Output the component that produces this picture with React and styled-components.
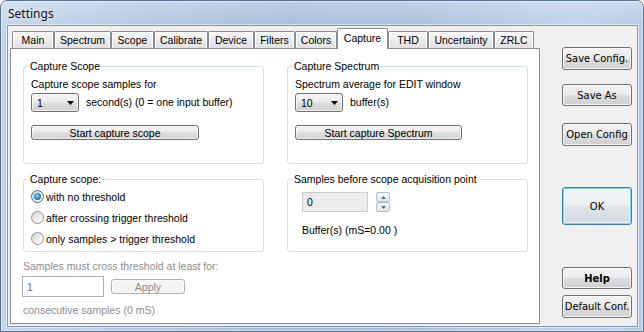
import React from 'react'
import styled, { createGlobalStyle } from 'styled-components'

const Global = createGlobalStyle`
  html, body { margin: 0; padding: 0; background: #fff; }
  body { width: 644px; height: 332px; overflow: hidden; }
  * { box-sizing: border-box; }
`

const UI = '"Liberation Sans", Arial, sans-serif'
const TAHOMA = '"DejaVu Sans Condensed", "DejaVu Sans", sans-serif'

const Window = styled.div`
  width: 644px;
  height: 332px;
  border: 1px solid #5b708a;
  border-radius: 7px 7px 0 0;
  padding: 0 5px 4px 6px;
  display: flex;
  flex-direction: column;
  background:
    linear-gradient(180deg, rgba(255,255,255,0.28), rgba(255,255,255,0) 26px),
    linear-gradient(90deg, #c4d6eb 0%, #b3c8e2 22%, #a5bddb 45%, #aac1de 65%, #bfd2e9 90%, #b5cae4 100%);
  box-shadow: inset 0 0 0 1px rgba(255,255,255,0.45);
`

const TitleBar = styled.div`
  height: 24px;
  flex: none;
  display: flex;
  align-items: center;
  padding: 0 0 0 1px;
  font: 12px "Noto Sans", "Open Sans", sans-serif;
  color: #111;
  text-shadow: 0 0 6px rgba(255,255,255,0.9);
`

const Client = styled.div`
  flex: 1;
  display: flex;
  align-items: flex-start;
  background: #f0f0f0;
  border: 1px solid #8597ae;
  box-shadow: 0 0 0 1px rgba(255,255,255,0.5);
`

const TabControl = styled.div`
  margin: 2px 0 0 2px;
  width: 530px;
  display: flex;
  flex-direction: column;
`

const TabStrip = styled.div`
  height: 20px;
  display: flex;
  align-items: flex-end;
  padding-left: 2px;
`

const Tab = styled.div`
  width: ${p => p.$w}px;
  height: ${p => (p.$active ? 21 : 17)}px;
  margin-bottom: ${p => (p.$active ? -1 : 0)}px;
  position: relative;
  z-index: ${p => (p.$active ? 1 : 0)};
  display: flex;
  align-items: center;
  justify-content: center;
  padding-bottom: ${p => (p.$active ? 3 : 0)}px;
  border: 1px solid #898c95;
  border-bottom: none;
  border-radius: 2px 2px 0 0;
  background: ${p => (p.$active ? '#fff' : 'linear-gradient(#f6f6f6, #ededed 50%, #e0e0e0)')};
  box-shadow: ${p => (p.$active ? 'none' : 'inset 1px 1px 0 #fff, inset -1px 0 0 #fff')};
  font: 10.5px ${UI};
  color: #000;
  white-space: nowrap;
`

const Panel = styled.div`
  height: 276px;
  border: 1px solid #898c95;
  background: #fff;
  padding: 11px 11px 0 12px;
`

const Grid = styled.div`
  display: grid;
  grid-template-columns: 241px 241px;
  column-gap: 23px;
  row-gap: 9px;
`

const Group = styled.fieldset`
  margin: 0;
  min-width: 0;
  padding: 0 7px ${p => p.$pb}px 7px;
  border: 1px solid #d5dfe5;
  border-radius: 3px;
`

const Legend = styled.legend`
  padding: 0 1px;
  margin-left: -2px;
  font: 10.5px/13px ${UI};
  color: #000;
`

const Line = styled.div`
  font: 10.5px/13px ${UI};
  color: ${p => (p.$off ? '#8d8d8d' : '#000')};
  margin-top: ${p => p.$mt || 0}px;
  margin-left: ${p => p.$ml || 0}px;
  white-space: nowrap;
`

const Row = styled.div`
  display: flex;
  align-items: center;
  gap: ${p => p.$gap || 7}px;
  margin-top: ${p => p.$mt || 0}px;
  margin-left: ${p => p.$ml || 0}px;
`

const Combo = styled.div`
  width: 48px;
  height: 19px;
  border: 1px solid #707070;
  border-radius: 3px;
  display: flex;
  align-items: center;
  justify-content: space-between;
  padding: 0 4px 0 5px;
  background: linear-gradient(#f4f4f4, #ebebeb 48%, #dddddd 52%, #d1d1d1);
  box-shadow: inset 0 0 0 1px rgba(255,255,255,0.7);
  font: 10.5px ${UI};
`

const SmallButton = styled.div`
  width: ${p => p.$w}px;
  height: 15px;
  margin-top: ${p => p.$mt || 0}px;
  margin-left: ${p => p.$ml || 0}px;
  border: 1px solid ${p => (p.$off ? '#adb2b5' : '#707070')};
  border-radius: 3px;
  display: flex;
  align-items: center;
  justify-content: center;
  background: ${p => (p.$off ? '#f4f4f4' : 'linear-gradient(#f4f4f4, #ebebeb 48%, #dddddd 52%, #d3d3d3)')};
  box-shadow: inset 0 0 0 1px rgba(255,255,255,0.6);
  font: 10.5px ${UI};
  color: ${p => (p.$off ? '#8d8d8d' : '#000')};
`

const RadioRow = styled.div`
  height: 21px;
  display: flex;
  align-items: center;
  gap: 2px;
  font: 10.5px ${UI};
`

const Radio = styled.span`
  width: 13px;
  height: 13px;
  flex: none;
  border-radius: 50%;
  border: 1px solid ${p => (p.$on ? '#4b6c8a' : '#949596')};
  background: linear-gradient(135deg, #d2d2d2, #f0f0f0 60%, #fbfbfb);
  position: relative;
  &::after {
    content: '';
    display: ${p => (p.$on ? 'block' : 'none')};
    position: absolute;
    inset: 2px;
    border-radius: 50%;
    background: radial-gradient(circle at 45% 40%, #9fe6ff 0, #2c8fd0 45%, #0d4f86 100%);
  }
`

const TextBox = styled.div`
  width: ${p => p.$w}px;
  height: ${p => p.$h}px;
  margin-left: ${p => p.$ml || 0}px;
  border: 1px solid ${p => p.$border};
  background: ${p => p.$bg};
  display: flex;
  align-items: center;
  padding-left: 4px;
  font: 10.5px ${UI};
  color: ${p => p.$color};
`

const Spin = styled.div`
  width: 14px;
  height: 20px;
  margin-left: 1px;
  display: flex;
  flex-direction: column;
`

const SpinHalf = styled.div`
  flex: 1;
  border: 1px solid #b9c0c9;
  border-radius: 2px;
  background: linear-gradient(#f7f8fa, #e3e7ec);
  display: flex;
  align-items: center;
  justify-content: center;
`

const Side = styled.div`
  margin-left: 22px;
  padding-top: 21px;
  display: flex;
  flex-direction: column;
`

const DlgButton = styled.div`
  width: 70px;
  height: ${p => p.$h || 23}px;
  margin-top: ${p => p.$mt || 0}px;
  border: 1px solid ${p => (p.$def ? '#3c7fb1' : '#707070')};
  border-radius: 3px;
  display: flex;
  align-items: center;
  justify-content: center;
  background: ${p => (p.$def
    ? 'linear-gradient(#f3f6f8, #eaeff2 48%, #dde4e9 52%, #d2dbe1)'
    : 'linear-gradient(#f2f2f2, #ebebeb 48%, #dddddd 52%, #cfcfcf)')};
  box-shadow: ${p => (p.$def ? 'inset 0 0 0 1px #7fd2f7, inset 0 0 0 2px rgba(255,255,255,0.55)' : 'inset 0 0 0 1px rgba(255,255,255,0.75)')};
  font: ${p => (p.$bold ? 'bold ' : '')}11px ${TAHOMA};
  color: #000;
  white-space: nowrap;
`

const Arrow = ({ up, color = '#000', w = 7, h = 4 }) => (
  <svg width={w} height={h} viewBox={`0 0 ${w} ${h}`}>
    <polygon points={up ? `0,${h} ${w / 2},0 ${w},${h}` : `0,0 ${w},0 ${w / 2},${h}`} fill={color} />
  </svg>
)

const tabs = [
  ['Main', 42], ['Spectrum', 57], ['Scope', 43], ['Calibrate', 54], ['Device', 46],
  ['Filters', 41], ['Colors', 42], ['Capture', 51], ['THD', 40], ['Uncertainty', 66], ['ZRLC', 40],
]

export default function App() {
  return (
    <>
      <Global />
      <Window>
        <TitleBar>Settings</TitleBar>
        <Client>
          <TabControl>
            <TabStrip>
              {tabs.map(([name, w]) => (
                <Tab key={name} $w={w} $active={name === 'Capture'}>{name}</Tab>
              ))}
            </TabStrip>
            <Panel>
              <Grid>
                <Group $pb={23}>
                  <Legend>Capture Scope</Legend>
                  <Line $mt={5}>Capture scope samples for</Line>
                  <Row $mt={2}>
                    <Combo>1<Arrow /></Combo>
                    <Line>second(s) (0 = one input buffer)</Line>
                  </Row>
                  <SmallButton $w={168} $mt={13}>Start capture scope</SmallButton>
                </Group>
                <Group $pb={23}>
                  <Legend>Capture Spectrum</Legend>
                  <Line $mt={5}>Spectrum average for EDIT window</Line>
                  <Row $mt={2}>
                    <Combo>10<Arrow /></Combo>
                    <Line>buffer(s)</Line>
                  </Row>
                  <SmallButton $w={167} $mt={13}>Start capture Spectrum</SmallButton>
                </Group>
                <Group $pb={2}>
                  <Legend>Capture scope:</Legend>
                  <RadioRow><Radio $on />with no threshold</RadioRow>
                  <RadioRow><Radio />after crossing trigger threshold</RadioRow>
                  <RadioRow><Radio />only samples &gt; trigger threshold</RadioRow>
                </Group>
                <Group $pb={2}>
                  <Legend>Samples before scope acquisition point</Legend>
                  <Row $mt={6} $ml={7} $gap={0}>
                    <TextBox $w={66} $h={20} $border="#c9cdd2" $bg="#ececec" $color="#000">0</TextBox>
                    <Spin>
                      <SpinHalf><Arrow up w={5} h={3} color="#4f6f9c" /></SpinHalf>
                      <SpinHalf><Arrow w={5} h={3} color="#4f6f9c" /></SpinHalf>
                    </Spin>
                  </Row>
                  <Line $mt={12} $ml={7}>Buffer(s) (mS=0.00 )</Line>
                </Group>
              </Grid>
              <Line $off $mt={8}>Samples must cross threshold at least for:</Line>
              <Row $mt={3} $gap={7}>
                <TextBox $w={82} $h={21} $ml={-1} $border="#aeb2b7" $bg="#fff" $color="#6d6d6d">1</TextBox>
                <SmallButton $off $w={74}>Apply</SmallButton>
              </Row>
              <Line $off $mt={7}>consecutive samples (0 mS)</Line>
            </Panel>
          </TabControl>
          <Side>
            <DlgButton>Save Config.</DlgButton>
            <DlgButton $mt={14} $h={22}>Save As</DlgButton>
            <DlgButton $mt={17}>Open Config</DlgButton>
            <DlgButton $mt={41} $h={38} $def>OK</DlgButton>
            <DlgButton $mt={42} $h={22} $bold>Help</DlgButton>
            <DlgButton $mt={6}>Default Conf.</DlgButton>
          </Side>
        </Client>
      </Window>
    </>
  )
}
